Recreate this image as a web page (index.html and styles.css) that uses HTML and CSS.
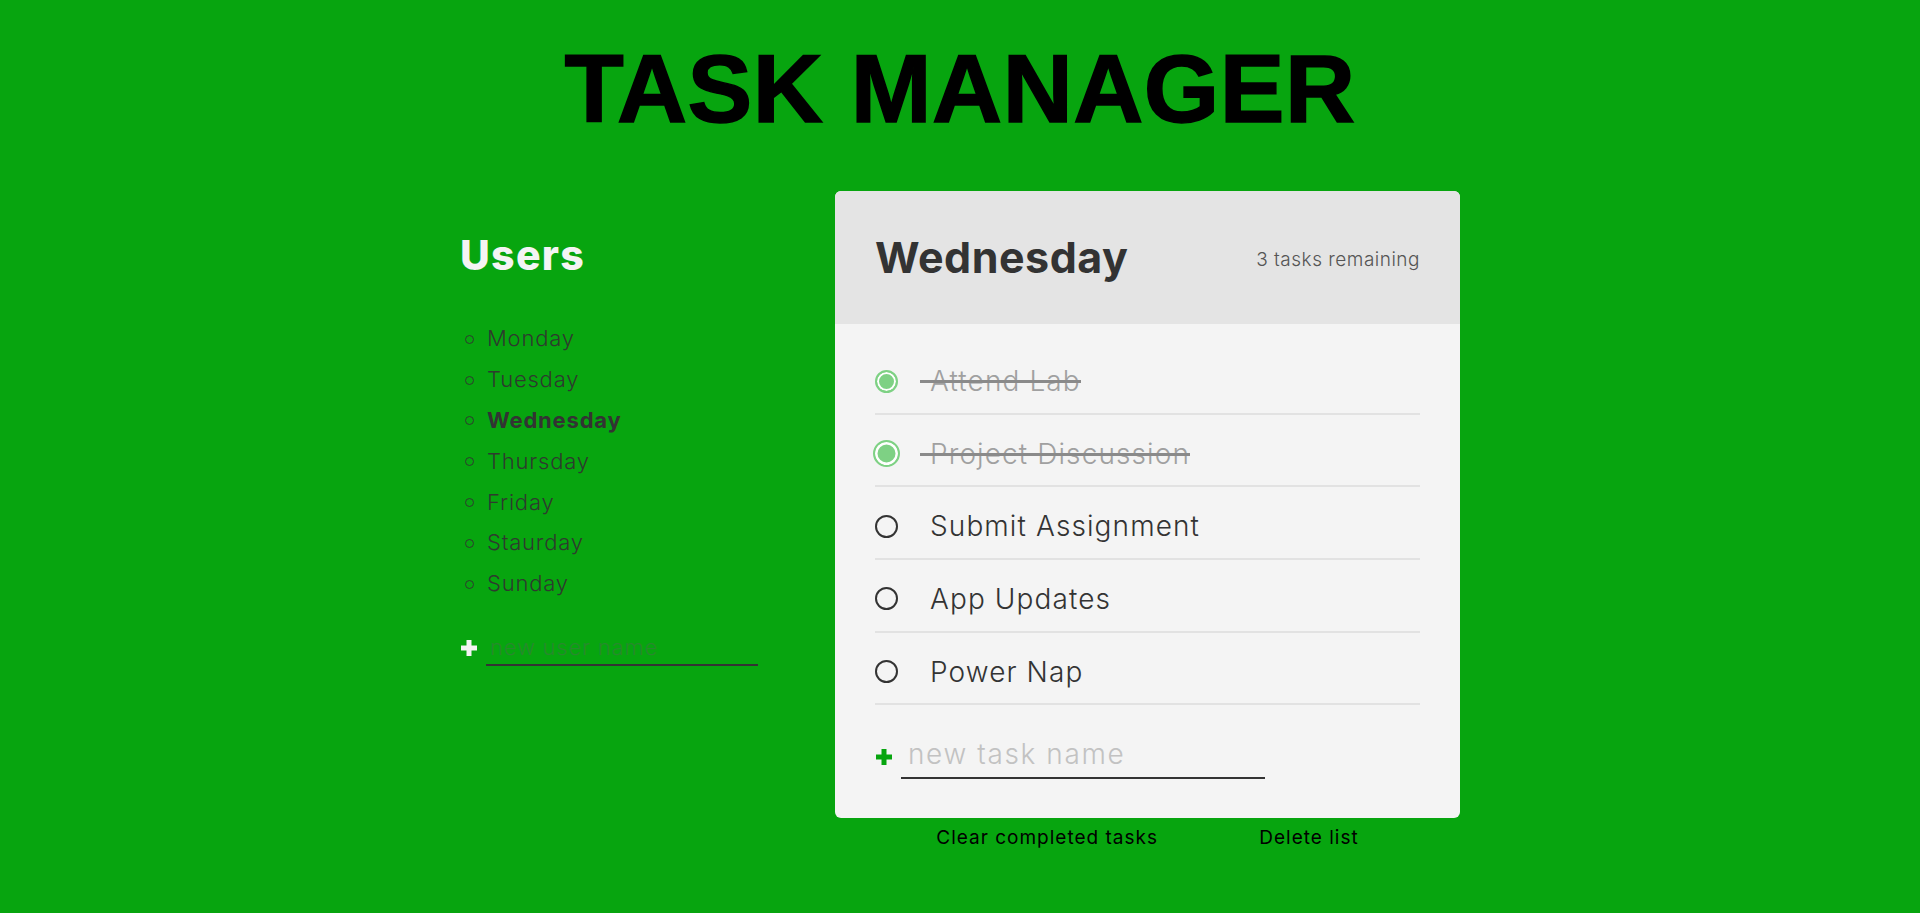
FILE: index.html
```html
<!DOCTYPE html>
<html lang="en">
<head>
<meta charset="utf-8">
<title>Task Manager</title>
<link rel="stylesheet" href="styles.css">
</head>
<body>
<h1 class="title">TASK MANAGER</h1>
<div class="layout">
  <aside class="users">
    <h2 class="users-title">Users</h2>
    <ul class="user-list">
      <li class="user-item">Monday</li>
      <li class="user-item">Tuesday</li>
      <li class="user-item active">Wednesday</li>
      <li class="user-item">Thursday</li>
      <li class="user-item">Friday</li>
      <li class="user-item">Staurday</li>
      <li class="user-item">Sunday</li>
    </ul>
    <form class="new-form new-user">
      <svg class="plus" width="16" height="16" viewBox="0 0 16 16"><rect x="5.5" y="0" width="5" height="16" fill="#f4f4f4"/><rect x="0" y="5.5" width="16" height="5" fill="#f4f4f4"/></svg>
      <input class="new-input user-input" type="text" placeholder="new user name">
    </form>
  </aside>
  <section class="todo">
    <div class="card">
      <div class="card-header">
        <h2 class="list-title">Wednesday</h2>
        <p class="task-count">3 tasks remaining</p>
      </div>
      <div class="card-body">
        <div class="task done">
          <span class="check"></span>
          <span class="task-text">Attend Lab</span>
        </div>
        <div class="task done hover">
          <span class="check"></span>
          <span class="task-text">Project Discussion</span>
        </div>
        <div class="task">
          <span class="check"></span>
          <span class="task-text">Submit Assignment</span>
        </div>
        <div class="task">
          <span class="check"></span>
          <span class="task-text">App Updates</span>
        </div>
        <div class="task">
          <span class="check"></span>
          <span class="task-text">Power Nap</span>
        </div>
        <form class="new-form new-task">
          <svg class="plus" width="16" height="16" viewBox="0 0 16 16"><rect x="5.5" y="0" width="5" height="16" fill="#07a50f"/><rect x="0" y="5.5" width="16" height="5" fill="#07a50f"/></svg>
          <input class="new-input task-input" type="text" placeholder="new task name">
        </form>
      </div>
    </div>
    <div class="actions">
      <button class="action-btn" type="button">Clear completed tasks</button>
      <button class="action-btn" type="button">Delete list</button>
    </div>
  </section>
</div>
</body>
</html>
```
FILE: styles.css
```css
* { box-sizing: border-box; }

html, body {
  margin: 0;
  padding: 0;
}

body {
  background: #07a50f;
  min-height: 913px;
  font-family: Inter, "Work Sans", "Open Sans", sans-serif;
  color: #333;
}

.title {
  margin: 40px 0 0;
  text-align: center;
  font-family: "Liberation Sans", Arial, sans-serif;
  font-weight: 700;
  font-size: 97px;
  line-height: 97px;
  letter-spacing: 0.5px;
  -webkit-text-stroke: 1.5px #000;
  color: #000;
}

.layout {
  width: 1000px;
  margin: 54px auto 0;
  display: grid;
  grid-template-columns: 375px 625px;
}

/* Users column */
.users {
  padding-top: 43.5px;
}

.users-title {
  margin: 0;
  font-size: 41px;
  line-height: 40px;
  font-weight: 800;
  letter-spacing: 1.3px;
  color: #f4f4f4;
}

.user-list {
  list-style: none;
  margin: 43.5px 0 0;
  padding: 0;
}

.user-item {
  display: flex;
  align-items: center;
  height: 40.8px;
  font-size: 22px;
  font-weight: 300;
  letter-spacing: 0.8px;
  color: #2e3a2e;
}

.user-item::before {
  content: "";
  width: 7px;
  height: 7px;
  border: 1.5px solid #2e3a2e;
  border-radius: 50%;
  margin: 2px 13px 0 5px;
  flex: none;
}

.user-item.active {
  font-weight: 700;
  color: #333;
}

.new-form {
  display: flex;
  align-items: center;
}

.new-user {
  margin-top: 26px;
}

.new-form .plus {
  flex: none;
}

.new-user .plus {
  margin: 0 9px 0 1px;
}

.new-input {
  border: none;
  border-bottom: 2px solid #333;
  background: transparent;
  outline: none;
  font-family: Inter, "Work Sans", sans-serif;
  font-weight: 300;
  padding: 0 0 0 4px;
}

.user-input {
  width: 272px;
  height: 36px;
  font-size: 22px;
  letter-spacing: 0.8px;
  color: #333;
}

.user-input::placeholder {
  color: #278a2d;
}

/* Card */
.card {
  border-radius: 6px;
  overflow: hidden;
  background: #f4f4f4;
}

.card-header {
  height: 133px;
  background: #e4e4e4;
  padding: 0 40px;
  display: flex;
  align-items: center;
  justify-content: space-between;
}

.list-title {
  margin: 0;
  font-size: 43px;
  line-height: 1;
  font-weight: 700;
  letter-spacing: 0.5px;
  color: #333;
}

.task-count {
  margin: 3px 0 0;
  font-size: 19px;
  font-weight: 300;
  letter-spacing: 0.5px;
  color: #555;
}

.card-body {
  padding: 18px 40px 39px;
}

.task {
  display: flex;
  align-items: center;
  padding: 22px 0 14.67px;
  border-bottom: 2px solid #e2e2e2;
}

.check {
  flex: none;
  width: 23px;
  height: 23px;
  border: 2px solid #333;
  border-radius: 50%;
  margin-right: 22px;
}

.task-text {
  position: relative;
  padding-left: 10px;
  font-size: 28px;
  line-height: 34px;
  font-weight: 300;
  letter-spacing: 1.1px;
  color: #333;
}

.task.done .check {
  border-color: #7ed184;
  background: #7ed184;
  box-shadow: inset 0 0 0 2px #fff;
}

.task.done.hover .check {
  width: 27px;
  height: 27px;
  margin: 0 20px 0 -2px;
  border-width: 2.5px;
  box-shadow: inset 0 0 0 2.5px #fff;
}

.task.done .task-text {
  color: #a0a0a0;
}

.task.done .task-text::after {
  content: "";
  position: absolute;
  left: 0;
  right: 0;
  top: 16px;
  height: 3px;
  background: #8a8a8a;
}

.new-task {
  margin-top: 30px;
}

.new-task .plus {
  margin: 0 9px 0 1px;
}

.task-input {
  width: 364px;
  height: 44px;
  font-size: 28px;
  letter-spacing: 1.6px;
  color: #333;
  padding: 0 0 5px 7px;
}

.task-input::placeholder {
  color: #c2c2c2;
}

/* Actions */
.actions {
  display: flex;
  justify-content: space-evenly;
  padding-top: 9px;
}

.action-btn {
  background: none;
  border: none;
  padding: 0;
  font-family: Inter, "Work Sans", sans-serif;
  font-size: 19px;
  line-height: 22px;
  font-weight: 400;
  letter-spacing: 1px;
  color: #000;
  cursor: pointer;
}
```
